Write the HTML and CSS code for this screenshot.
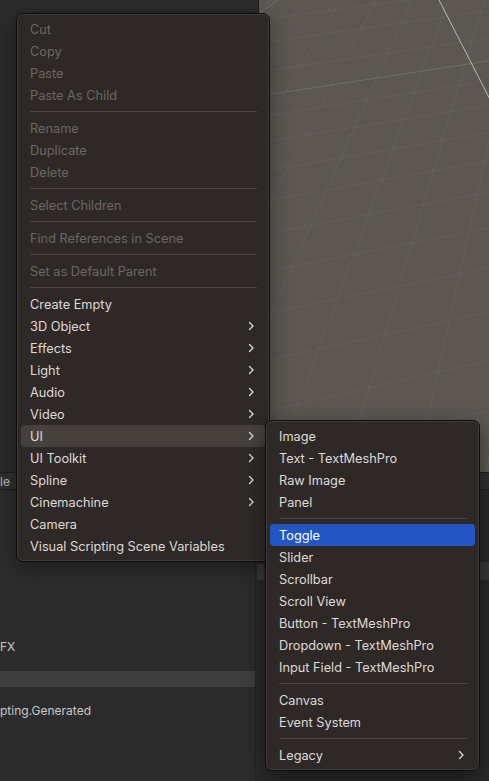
FILE: index.html
```html
<!DOCTYPE html>
<html>
<head>
<meta charset="utf-8">
<link rel="stylesheet" href="styles.css">
</head>
<body>
<div class="screen">
  <div class="top">
    <div class="left-panel"></div>
    <div class="scene">
      <svg class="grid" width="230" height="472" viewBox="0 0 230 472">
        <g stroke="rgba(255,255,255,0.05)" stroke-width="1" fill="none">
          <line x1="366" y1="-475" x2="-413" y2="472"/>
          <line x1="366" y1="-475" x2="-343" y2="472"/>
          <line x1="366" y1="-475" x2="-272" y2="472"/>
          <line x1="366" y1="-475" x2="-201" y2="472"/>
          <line x1="366" y1="-475" x2="-130" y2="472"/>
          <line x1="366" y1="-475" x2="-59" y2="472"/>
          <line x1="366" y1="-475" x2="14" y2="472"/>
          <line x1="366" y1="-475" x2="85" y2="472"/>
          <line x1="366" y1="-475" x2="157" y2="472"/>
          <line x1="366" y1="-475" x2="228" y2="472"/>
          <line x1="366" y1="-475" x2="299" y2="472"/>
          <line x1="4141" y1="-537" x2="0" y2="20"/>
          <line x1="4141" y1="-537" x2="0" y2="43"/>
          <line x1="4141" y1="-537" x2="0" y2="72"/>
          <line x1="4141" y1="-537" x2="0" y2="117"/>
          <line x1="4141" y1="-537" x2="0" y2="143"/>
          <line x1="4141" y1="-537" x2="0" y2="172"/>
          <line x1="4141" y1="-537" x2="0" y2="202"/>
          <line x1="4141" y1="-537" x2="0" y2="235"/>
          <line x1="4141" y1="-537" x2="0" y2="273"/>
          <line x1="4141" y1="-537" x2="0" y2="315"/>
          <line x1="4141" y1="-537" x2="0" y2="362"/>
          <line x1="4141" y1="-537" x2="0" y2="413"/>
          <line x1="4141" y1="-537" x2="0" y2="466"/>
        </g>
        <line x1="4141" y1="-537" x2="0" y2="96" stroke="rgba(255,255,255,0.13)" stroke-width="1"/>
        <line x1="1" y1="13" x2="19" y2="0" stroke="rgba(255,255,255,0.14)" stroke-width="1"/>
        <line x1="180" y1="0" x2="240" y2="117" stroke="#bcb8b4" stroke-width="1"/>
      </svg>
    </div>
  </div>
  <div class="toolbar"><span class="tab-text">le</span></div>
  <div class="bottom">
    <div class="tree">
      <div class="row">FX</div>
      <div class="row"></div>
      <div class="row selected"></div>
      <div class="row"></div>
      <div class="row">pting.Generated</div>
    </div>
    <div class="scrollbar"><div class="thumb"></div></div>
    <div class="rest"><div class="rest-band"></div></div>
  </div>

  <div class="menu main-menu">
    <div class="item disabled">Cut</div>
    <div class="item disabled">Copy</div>
    <div class="item disabled">Paste</div>
    <div class="item disabled">Paste As Child</div>
    <div class="sep"></div>
    <div class="item disabled">Rename</div>
    <div class="item disabled">Duplicate</div>
    <div class="item disabled">Delete</div>
    <div class="sep"></div>
    <div class="item disabled">Select Children</div>
    <div class="sep"></div>
    <div class="item disabled">Find References in Scene</div>
    <div class="sep"></div>
    <div class="item disabled">Set as Default Parent</div>
    <div class="sep"></div>
    <div class="item">Create Empty</div>
    <div class="item">3D Object<svg class="chev" width="7" height="10" viewBox="0 0 7 10"><path d="M1.5 1.5 L5 5 L1.5 8.5"/></svg></div>
    <div class="item">Effects<svg class="chev" width="7" height="10" viewBox="0 0 7 10"><path d="M1.5 1.5 L5 5 L1.5 8.5"/></svg></div>
    <div class="item">Light<svg class="chev" width="7" height="10" viewBox="0 0 7 10"><path d="M1.5 1.5 L5 5 L1.5 8.5"/></svg></div>
    <div class="item">Audio<svg class="chev" width="7" height="10" viewBox="0 0 7 10"><path d="M1.5 1.5 L5 5 L1.5 8.5"/></svg></div>
    <div class="item">Video<svg class="chev" width="7" height="10" viewBox="0 0 7 10"><path d="M1.5 1.5 L5 5 L1.5 8.5"/></svg></div>
    <div class="item open">UI<svg class="chev" width="7" height="10" viewBox="0 0 7 10"><path d="M1.5 1.5 L5 5 L1.5 8.5"/></svg></div>
    <div class="item">UI Toolkit<svg class="chev" width="7" height="10" viewBox="0 0 7 10"><path d="M1.5 1.5 L5 5 L1.5 8.5"/></svg></div>
    <div class="item">Spline<svg class="chev" width="7" height="10" viewBox="0 0 7 10"><path d="M1.5 1.5 L5 5 L1.5 8.5"/></svg></div>
    <div class="item">Cinemachine<svg class="chev" width="7" height="10" viewBox="0 0 7 10"><path d="M1.5 1.5 L5 5 L1.5 8.5"/></svg></div>
    <div class="item">Camera</div>
    <div class="item">Visual Scripting Scene Variables</div>
  </div>

  <div class="menu sub-menu">
    <div class="item">Image</div>
    <div class="item">Text - TextMeshPro</div>
    <div class="item">Raw Image</div>
    <div class="item">Panel</div>
    <div class="sep"></div>
    <div class="item active">Toggle</div>
    <div class="item">Slider</div>
    <div class="item">Scrollbar</div>
    <div class="item">Scroll View</div>
    <div class="item">Button - TextMeshPro</div>
    <div class="item">Dropdown - TextMeshPro</div>
    <div class="item">Input Field - TextMeshPro</div>
    <div class="sep"></div>
    <div class="item">Canvas</div>
    <div class="item">Event System</div>
    <div class="sep"></div>
    <div class="item">Legacy<svg class="chev" width="7" height="10" viewBox="0 0 7 10"><path d="M1.5 1.5 L5 5 L1.5 8.5"/></svg></div>
  </div>
</div>
</body>
</html>
```

FILE: styles.css
```css
* { box-sizing: border-box; }

html, body {
  margin: 0;
  padding: 0;
  width: 489px;
  height: 781px;
  overflow: hidden;
  background: #2b2b2b;
  font-family: "Inter", "Liberation Sans", sans-serif;
}

.screen {
  position: relative;
  width: 489px;
  height: 781px;
  display: flex;
  flex-direction: column;
  overflow: hidden;
}

.top {
  height: 472px;
  display: grid;
  grid-template-columns: 259px 1fr;
}

.left-panel {
  background: #2b2b2b;
  border-right: 1px solid #1d1d1d;
}

.scene {
  background: #5c5752;
  overflow: hidden;
}

.grid { display: block; }

.toolbar {
  height: 18px;
  background: #303030;
  border-top: 1px solid #1f1f1f;
  border-bottom: 1px solid #1f1f1f;
  display: flex;
  align-items: center;
}

.tab-text {
  font-size: 12px;
  color: #b9b9b9;
  padding-left: 0;
}

.bottom {
  flex: 1;
  display: grid;
  grid-template-columns: 255px 10px 1fr;
  background: #2c2c2c;
}

.tree {
  padding-top: 149px;
  display: flex;
  flex-direction: column;
}

.row {
  height: 16px;
  font-size: 12px;
  line-height: 16px;
  color: #c8c8c8;
}

.row.selected { background: #3e3e3e; }

.scrollbar {
  background: #292929;
  border-left: 1px solid #232323;
  padding-top: 74px;
}

.thumb {
  height: 16px;
  margin: 0 1px;
  background: #3c3c3c;
}

.rest {
  background: #282828;
  padding-top: 72px;
}

.rest-band {
  height: 18px;
  background: #363636;
}

/* Menus */
.menu {
  position: absolute;
  background: #2e2927;
  border: 1px solid #0e0d0c;
  border-radius: 7px;
  box-shadow: inset 0 0 0 1px rgba(255,255,255,0.09), 0 6px 22px rgba(0,0,0,0.4);
  padding: 4px;
  display: flex;
  flex-direction: column;
}

.main-menu {
  left: 16px;
  top: 13px;
  width: 254px;
}

.sub-menu {
  left: 265px;
  top: 420px;
  width: 215px;
}

.item {
  height: 22px;
  display: flex;
  align-items: center;
  justify-content: space-between;
  padding: 0 10px 0 9px;
  font-size: 12.75px;
  color: #dedad8;
  border-radius: 4px;
  white-space: nowrap;
}

.item.disabled { color: #6c6765; }

.item.open { background: #47413e; }

.item.active {
  background: #2455c5;
  color: #ffffff;
}

.sub-menu .item { padding-right: 10px; }

.chev {
  flex: none;
}

.chev path {
  fill: none;
  stroke: #d9d6d4;
  stroke-width: 1.4;
  stroke-linecap: round;
  stroke-linejoin: round;
}

.sep {
  height: 11px;
  display: flex;
  align-items: center;
  padding: 0 8px 0 9px;
}

.sep::before {
  content: "";
  flex: 1;
  height: 1px;
  background: #4a4543;
}
```
